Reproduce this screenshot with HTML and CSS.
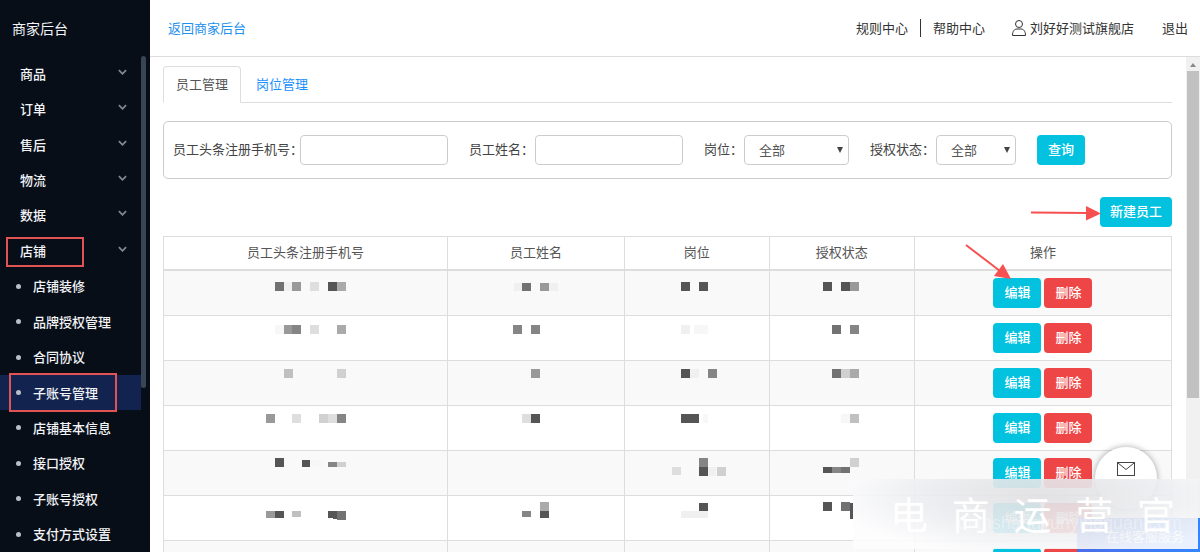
FILE: index.html
```html
<!DOCTYPE html>
<html lang="zh-CN">
<head>
<meta charset="utf-8">
<title>商家后台</title>
<link rel="stylesheet" href="styles.css">
</head>
<body>
<div class="app">
  <aside class="sidebar">
    <h1 class="brand">商家后台</h1>
    <div class="menu-wrap">
      <ul class="menu">
        <li class="group"><a href="#">商品</a><svg class="chev" viewBox="0 0 10 6"><path d="M1 1l4 4 4-4"/></svg></li>
        <li class="group"><a href="#">订单</a><svg class="chev" viewBox="0 0 10 6"><path d="M1 1l4 4 4-4"/></svg></li>
        <li class="group"><a href="#">售后</a><svg class="chev" viewBox="0 0 10 6"><path d="M1 1l4 4 4-4"/></svg></li>
        <li class="group"><a href="#">物流</a><svg class="chev" viewBox="0 0 10 6"><path d="M1 1l4 4 4-4"/></svg></li>
        <li class="group"><a href="#">数据</a><svg class="chev" viewBox="0 0 10 6"><path d="M1 1l4 4 4-4"/></svg></li>
        <li class="group"><a href="#">店铺</a><svg class="chev" viewBox="0 0 10 6"><path d="M1 1l4 4 4-4"/></svg><span class="mark mark-shop"></span></li>
        <li class="sub"><a href="#">店铺装修</a></li>
        <li class="sub"><a href="#">品牌授权管理</a></li>
        <li class="sub"><a href="#">合同协议</a></li>
        <li class="sub active"><a href="#">子账号管理</a><span class="mark mark-account"></span></li>
        <li class="sub"><a href="#">店铺基本信息</a></li>
        <li class="sub"><a href="#">接口授权</a></li>
        <li class="sub"><a href="#">子账号授权</a></li>
        <li class="sub"><a href="#">支付方式设置</a></li>
      </ul>
      <div class="menu-scroll"></div>
    </div>
  </aside>

  <div class="page">
    <header class="topbar">
      <a class="back" href="#">返回商家后台</a>
      <nav class="topnav">
        <a class="rules" href="#">规则中心</a>
        <a class="help" href="#">帮助中心</a>
        <a class="user" href="#"><svg class="user-icon" viewBox="0 0 16 18"><circle cx="8" cy="5" r="3.500"/><path d="M1.500 16.500c0-4.500 2-6.500 4.500-6.500h4c2.500 0 4.500 2 4.500 6.500z"/></svg>刘好好测试旗舰店</a>
        <a class="logout" href="#">退出</a>
      </nav>
    </header>

    <div class="body">
      <main class="content">
        <nav class="tabs">
          <a class="tab current" href="#">员工管理</a>
          <a class="tab" href="#">岗位管理</a>
        </nav>

        <form class="filters">
          <div class="field"><label class="l-phone" for="phone">员工头条注册手机号：</label><input id="phone" type="text"></div>
          <div class="field"><label class="l-four" for="name">员工姓名：</label><input id="name" type="text"></div>
          <div class="field"><label class="l-two" for="post">岗位：</label><span class="pick"><select id="post" class="s-post"><option>全部</option></select></span></div>
          <div class="field"><label class="l-four" for="state">授权状态：</label><span class="pick"><select id="state" class="s-state"><option>全部</option></select></span></div>
          <button class="btn" type="button">查询</button>
        </form>

        <div class="toolbar">
          <button class="btn create" type="button">新建员工<svg class="arrow arrow-create" viewBox="0 0 72 20"><path class="shaft" d="M1 9.500L58 10"/><path class="head" d="M56 3L71 10.500 56 17.500z"/></svg></button>
        </div>

        <table class="staff">
          <colgroup><col class="c1"><col class="c2"><col class="c3"><col class="c4"><col class="c5"></colgroup>
          <thead><tr><th>员工头条注册手机号</th><th>员工姓名</th><th>岗位</th><th>授权状态</th><th>操作</th></tr></thead>
          <tbody>
            <tr>
              <td><svg class="mask" viewBox="0 0 100 44"><path class="k2" d="M19 11h9v9h-9z"/><path class="k8" d="M28 11h8v9h-8z"/><path class="k4" d="M36 11h9v9h-9z"/><path class="k7" d="M54 11h9v9h-9z"/><path class="k1" d="M72 11h9v9h-9z"/><path class="k5" d="M81 11h9v9h-9z"/></svg></td>
              <td><svg class="mask" viewBox="0 0 100 44"><path class="k8" d="M28 12h8v8h-8z"/><path class="k2" d="M36 12h9v8h-9z"/><path class="k4" d="M54 12h9v8h-9z"/><path class="k8" d="M63 12h9v8h-9z"/></svg></td>
              <td><svg class="mask" viewBox="0 0 100 44"><path class="k1" d="M34 11h9v9h-9zM52 11h9v9h-9z"/></svg></td>
              <td><svg class="mask" viewBox="0 0 100 44"><path class="k1" d="M31 11h9v9h-9zM49 11h9v9h-9z"/><path class="k4" d="M58 11h9v9h-9z"/></svg></td>
              <td><div class="ops"><button class="btn" type="button">编辑<svg class="arrow arrow-edit" viewBox="0 0 48 38"><path class="shaft" d="M1 2L35 28"/><path class="head" d="M38 21L46 36 29 33z"/></svg></button><button class="btn danger" type="button">删除</button></div></td>
            </tr>
            <tr>
              <td><svg class="mask" viewBox="0 0 100 44"><path class="k9" d="M19 9h9v9h-9z"/><path class="k4" d="M28 9h9v9h-9z"/><path class="k3" d="M36 9h9v9h-9z"/><path class="k7" d="M54 9h9v9h-9z"/><path class="k5" d="M81 9h9v9h-9z"/></svg></td>
              <td><svg class="mask" viewBox="0 0 100 44"><path class="k3" d="M27 9h9v9h-9zM45 9h9v9h-9z"/></svg></td>
              <td><svg class="mask" viewBox="0 0 100 44"><path class="k8" d="M34 9h9v9h-9z"/><path class="k9" d="M47 9h14v9h-14z"/></svg></td>
              <td><svg class="mask" viewBox="0 0 100 44"><path class="k2" d="M40 9h9v9h-9z"/><path class="k3" d="M58 9h9v9h-9z"/></svg></td>
              <td><div class="ops"><button class="btn" type="button">编辑</button><button class="btn danger" type="button">删除</button></div></td>
            </tr>
            <tr>
              <td><svg class="mask" viewBox="0 0 100 44"><path class="k6" d="M28 8h9v9h-9z"/><path class="k65" d="M81 8h9v9h-9z"/></svg></td>
              <td><svg class="mask" viewBox="0 0 100 44"><path class="k4" d="M45 8h9v9h-9z"/></svg></td>
              <td><svg class="mask" viewBox="0 0 100 44"><path class="k1" d="M34 8h9v9h-9z"/><path class="k8" d="M43 8h9v9h-9z"/><path class="k3" d="M61 8h9v9h-9z"/></svg></td>
              <td><svg class="mask" viewBox="0 0 100 44"><path class="k2" d="M40 8h9v9h-9z"/><path class="k65" d="M49 8h9v9h-9z"/><path class="k5" d="M58 8h9v9h-9z"/></svg></td>
              <td><div class="ops"><button class="btn" type="button">编辑</button><button class="btn danger" type="button">删除</button></div></td>
            </tr>
            <tr>
              <td><svg class="mask" viewBox="0 0 100 44"><path class="k4" d="M10 8h9v9h-9z"/><path class="k7" d="M36 8h9v9h-9zM72 8h9v9h-9z"/><path class="k65" d="M63 8h9v9h-9z"/><path class="k3" d="M81 8h9v9h-9z"/></svg></td>
              <td><svg class="mask" viewBox="0 0 100 44"><path class="k7" d="M36 8h9v9h-9z"/><path class="k1" d="M45 8h9v9h-9z"/></svg></td>
              <td><svg class="mask" viewBox="0 0 100 44"><path class="k1" d="M34 8h18v9h-18z"/><path class="k9" d="M56 8h5v9h-5z"/></svg></td>
              <td><svg class="mask" viewBox="0 0 100 44"><path class="k9" d="M49 8h9v9h-9z"/><path class="k6" d="M58 8h9v9h-9z"/></svg></td>
              <td><div class="ops"><button class="btn" type="button">编辑</button><button class="btn danger" type="button">删除</button></div></td>
            </tr>
            <tr>
              <td><svg class="mask" viewBox="0 0 100 44"><path class="k1" d="M19 7h9v9h-9zM46 9h7l1 1v6h-8z"/><path class="k9" d="M55 9h12v7h-12z"/><path class="k3" d="M72 11h9v5h-9z"/><path class="k65" d="M81 11h9v5h-9z"/></svg></td>
              <td></td>
              <td><svg class="mask" viewBox="0 0 100 44"><path class="k7" d="M25 16h9v8h-9z"/><path class="k3" d="M52 7h9v9h-9z"/><path class="k1" d="M52 16h9v9h-9z"/><path class="k8" d="M61 16h8v9h-8z"/><path class="k65" d="M70 16h9v9h-9z"/></svg></td>
              <td><svg class="mask" viewBox="0 0 100 44"><path class="k1" d="M31 16h9v6h-9z"/><path class="k3" d="M40 16h9v6h-9z"/><path class="k2" d="M49 16h9v6h-9z"/><path class="k65" d="M58 7h9v9h-9z"/></svg></td>
              <td><div class="ops"><button class="btn" type="button">编辑</button><button class="btn danger" type="button">删除</button></div></td>
            </tr>
            <tr>
              <td><svg class="mask" viewBox="0 0 100 44"><path class="k4" d="M10 15h9v7h-9z"/><path class="k1" d="M19 15h9v7h-9zM72 15h9v8h-4l-1-1h-4z"/><path class="k6" d="M36 15h9v6h-9z"/><path class="k2" d="M81 15h9v9h-9z"/></svg></td>
              <td><svg class="mask" viewBox="0 0 100 44"><path class="k3" d="M36 15h9v6h-9z"/><path class="k5" d="M54 6h9v9h-9z"/><path class="k1" d="M54 15h9v7h-9z"/></svg></td>
              <td><svg class="mask" viewBox="0 0 100 44"><path class="k1" d="M52 7h9v8h-9z"/><path class="k8" d="M34 15h27v7h-27z"/></svg></td>
              <td><svg class="mask" viewBox="0 0 100 44"><path class="k1" d="M31 6h9v9h-9zM58 7h3v16h-3z"/><path class="k2" d="M49 6h9v9h-9z"/></svg></td>
              <td><div class="ops"><button class="btn" type="button">编辑</button><button class="btn danger" type="button">删除</button></div></td>
            </tr>
            <tr>
              <td></td><td></td><td></td><td></td>
              <td><div class="ops"><button class="btn" type="button" aria-label="编辑"></button><button class="btn danger" type="button" aria-label="删除"></button></div></td>
            </tr>
          </tbody>
        </table>
      </main>
      <div class="scrollbar"><span class="scroll-up"></span><span class="scroll-thumb"></span></div>
    </div>
  </div>

  <button class="mail" type="button" aria-label="消息"><svg viewBox="0 0 20 16"><rect x="1.500" y="1.500" width="17" height="13"/><path d="M2 2l8 6.500L18 2"/></svg></button>
  <div class="chat">在线客服服务</div>
  <div class="watermark"><span class="wm-url">dianshangyunyingguan.com</span><div class="wm-name"><span>电</span><span>商</span><span>运</span><span>营</span><span>官</span></div></div>
</div>
</body>
</html>
```
FILE: styles.css
```css
* { box-sizing: border-box; }
body {
  margin: 0;
  font-family: "Noto Sans CJK SC", sans-serif;
  font-size: 13px;
  line-height: 18px;
  color: #444;
}
a { color: inherit; text-decoration: none; }
button, input, select { font: inherit; margin: 0; }

.app { position: relative; display: flex; height: 100vh; overflow: hidden; background: #fff; }

/* Sidebar */
.sidebar { flex: none; width: 150px; display: flex; flex-direction: column; background: #080e18; color: #f2f4f7; }
.brand { flex: none; margin: 0; height: 56px; padding: 0 12px; font-size: 14px; line-height: 56px; font-weight: 400; }
.menu-wrap { flex: 1; min-height: 0; display: flex; }
.menu { flex: none; width: 141px; margin: 0; padding: 0; list-style: none; display: flex; flex-direction: column; }
.menu li { position: relative; flex: 1; min-height: 35px; display: flex; align-items: center; font-weight: 500; }
.group { justify-content: space-between; padding: 0 14px 0 20px; }
.chev { width: 9px; height: 6px; margin-bottom: 4px; fill: none; stroke: #7f8792; stroke-width: 2; }
.sub { padding-left: 16px; gap: 12px; }
.sub::before { content: ""; width: 5px; height: 5px; border-radius: 50%; background: #b9bec8; }
.active { background: #13234f; }
.menu-scroll { width: 5px; height: 67%; border-radius: 3px; background: #394554; }
.mark { position: absolute; border: 2px solid #e25353; }
.mark-shop { left: 6px; top: 4px; width: 78px; height: 30px; }
.mark-account { left: 9px; top: -2px; width: 108px; height: 39px; }

/* Header */
.page { flex: 1; min-width: 0; display: flex; flex-direction: column; }
.topbar { flex: none; height: 57px; padding: 0 12px 0 18px; display: flex; align-items: center; justify-content: space-between; border-bottom: 1px solid #ddd; }
.back { color: #1e90ee; }
.topnav { display: flex; align-items: center; color: #333; }
.rules { padding-right: 12px; border-right: 1px solid #333; }
.help { padding: 0 26px 0 12px; }
.user { display: flex; align-items: center; gap: 3px; padding-right: 28px; }
.user-icon { width: 16px; height: 18px; fill: none; stroke: #333; stroke-width: 1; }

/* Content */
.body { flex: 1; min-height: 0; display: flex; overflow: hidden; }
.content { flex: 1; min-width: 0; padding: 9px 14px 0 13px; }
.tabs { display: flex; height: 37px; border-bottom: 1px solid #ddd; }
.tab { height: 37px; padding: 9px 15px; color: #1890ff; }
.current { padding: 8px 12px; border: 1px solid #ddd; border-bottom-color: #fff; border-radius: 4px 4px 0 0; color: #555; }

.filters { display: flex; align-items: center; gap: 21px; margin-top: 18px; height: 58px; padding: 0 9px; border: 1px solid #ccc; border-radius: 5px; }
.field { display: flex; align-items: center; }
.field label { white-space: nowrap; line-height: 16px; padding-bottom: 2px; }
.l-phone { width: 127px; }
.l-four { width: 66px; }
.l-two { width: 40px; }
.field input { width: 148px; height: 30px; border: 1px solid #ccc; border-radius: 4px; padding: 0 8px; }
.pick { position: relative; display: flex; }
.pick::after { content: ""; position: absolute; right: 6px; top: 12px; border: 3px solid transparent; border-top: 6px solid #444; border-bottom: 0; pointer-events: none; }
.pick select { appearance: none; height: 30px; padding: 0 14px; border: 1px solid #ccc; border-radius: 4px; background: #fff; color: #555; }
.s-post { width: 105px; }
.s-state { width: 80px; }

.btn { position: relative; height: 30px; padding: 0 10px 2px; border: 0; border-radius: 4px; background: #03c2df; color: #fff; font-weight: 500; white-space: nowrap; }
.filters .btn, .ops .btn { width: 48px; }
.btn.danger { background: #ee4646; }
.toolbar { display: flex; justify-content: flex-end; padding: 18px 0 9px; }

.arrow { position: absolute; pointer-events: none; }
.shaft { fill: none; stroke: #f75050; stroke-width: 2; }
.head { fill: #f75050; }
.arrow-create { width: 72px; height: 20px; right: 100%; top: 6px; margin-right: -2px; }
.arrow-edit { width: 48px; height: 38px; left: -28px; top: -35px; }

.staff { width: 100%; table-layout: fixed; border-collapse: collapse; }
.staff th, .staff td { border: 1px solid #ddd; padding: 0; text-align: center; vertical-align: middle; }
.staff th { height: 33px; padding-bottom: 2px; font-weight: 400; color: #555; border-bottom: 2px solid #ddd; }
.staff td { height: 45px; }
.staff tbody tr:nth-child(odd) { background: #f9f9f9; }
.c1 { width: 28.2%; }
.c2 { width: 17.5%; }
.c3 { width: 14.4%; }
.c4 { width: 14.4%; }
.c5 { width: 25.5%; }
.ops { display: flex; justify-content: center; gap: 3px; }
.mask { display: block; width: 100px; height: 44px; margin: 0 auto; shape-rendering: crispEdges; }
.k1 { fill: #555; }
.k2 { fill: #727272; }
.k3 { fill: #858585; }
.k4 { fill: #999; }
.k5 { fill: #aaa; }
.k6 { fill: #c0c0c0; }
.k65 { fill: #d0d0d0; }
.k7 { fill: #dedede; }
.k8 { fill: #f0f0f0; }
.k9 { fill: #f7f7f7; }

.scrollbar { flex: none; width: 14px; padding: 0 1px; background: #f1f1f1; display: flex; flex-direction: column; align-items: center; }
.scroll-up { margin: 6px 0 4px; border: 3px solid transparent; border-bottom: 4px solid #8a8a8a; border-top: 0; }
.scroll-thumb { width: 12px; height: 66%; background: #c1c1c1; }

/* Floating layers */
.mail { position: absolute; right: 43px; bottom: 43px; width: 62px; height: 62px; padding: 14px 0 0; border: 0; border-radius: 50%; background: #fff; box-shadow: 0 0 6px rgba(0, 0, 0, .35); display: flex; justify-content: center; align-items: flex-start; }
.mail svg { width: 20px; height: 16px; fill: none; stroke: #444; stroke-width: 1; }
.chat { position: absolute; right: 0; bottom: 0; width: 123px; height: 34px; padding: 9px 16px; background: linear-gradient(90deg, #4a6ee8, #3385ff); color: #fff; text-align: right; }
.watermark { position: absolute; right: 2px; bottom: 3px; width: 345px; height: 70px; background: radial-gradient(ellipse at 55% 25%, rgba(224, 224, 226, .92), rgba(236, 237, 240, .9) 45%, rgba(253, 253, 254, .9) 80%); color: #fff; }
.wm-name { display: flex; justify-content: space-between; padding: 10px 23px 0 37px; font-size: 38px; line-height: 48px; font-weight: 400; }
.wm-url { position: absolute; right: 16px; bottom: 16px; font-family: "Liberation Sans", sans-serif; font-size: 18px; line-height: 20px; color: rgba(255, 255, 255, .35); }
```
